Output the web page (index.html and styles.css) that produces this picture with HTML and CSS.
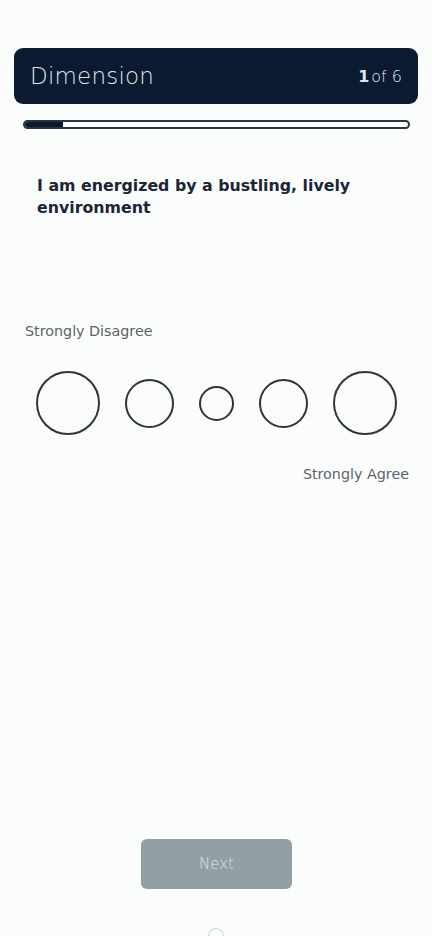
FILE: index.html
```html
<!DOCTYPE html>
<html>
<head>
<meta charset="utf-8">
<link rel="stylesheet" href="styles.css">
</head>
<body>
<div class="screen">
  <header class="topbar">
    <span class="title">Dimension</span>
    <span class="count"><b>1</b>of 6</span>
  </header>
  <div class="progress"><div class="fill"></div></div>
  <h1 class="question">I am energized by a bustling, lively environment</h1>
  <div class="label-left">Strongly Disagree</div>
  <div class="scale">
    <span class="dot d1"></span>
    <span class="dot d2"></span>
    <span class="dot d3"></span>
    <span class="dot d2"></span>
    <span class="dot d1"></span>
  </div>
  <div class="label-right">Strongly Agree</div>
  <div class="spacer"></div>
  <button class="next">Next</button>
  <div class="home"></div>
</div>
</body>
</html>
```
FILE: styles.css
```css
html, body {
  margin: 0;
  padding: 0;
  background: #fbfdfd;
}
body {
  font-family: "DejaVu Sans", "Noto Sans", sans-serif;
}
.screen {
  width: 432px;
  height: 936px;
  box-sizing: border-box;
  padding: 48px 14px 0;
  display: flex;
  flex-direction: column;
  overflow: hidden;
}
.topbar {
  height: 56px;
  background: #0b1a30;
  border-radius: 9px;
  display: flex;
  align-items: center;
  justify-content: space-between;
  padding: 0 16px;
  color: #dfe6ee;
}
.title {
  font-size: 23px;
  font-weight: 300;
  letter-spacing: 0.2px;
}
.count {
  font-size: 16px;
  font-weight: 300;
}
.count b {
  font-weight: 700;
  margin-right: 2px;
}
.progress {
  margin: 16px 8px 0 9px;
  height: 9px;
  border: 2px solid #2b3440;
  border-radius: 6px;
  background: #fff;
  overflow: hidden;
  box-sizing: border-box;
}
.fill {
  height: 100%;
  width: 10%;
  background: #0b1a30;
}
.question {
  margin: 46px 0 0 23px;
  font-size: 15.8px;
  font-weight: 700;
  line-height: 22px;
  color: #1b2536;
  width: 330px;
}
.label-left {
  margin: 104px 0 0 11px;
  font-size: 14.3px;
  font-weight: 400;
  color: #5e6368;
}
.scale {
  margin: 32px 0 0 22px;
  width: 361px;
  height: 64px;
  display: flex;
  align-items: center;
  justify-content: space-between;
}
.dot {
  display: block;
  border: 2px solid #303438;
  border-radius: 50%;
  box-sizing: border-box;
}
.d1 { width: 64px; height: 64px; }
.d2 { width: 49px; height: 49px; }
.d3 { width: 35px; height: 35px; }
.label-right {
  margin: 31px 9px 0 0;
  text-align: right;
  font-size: 14.3px;
  font-weight: 400;
  color: #5e6368;
}
.spacer {
  flex: 1;
}
.next {
  align-self: center;
  width: 151px;
  height: 50px;
  margin: 0 0 39px 1px;
  border: none;
  border-radius: 6px;
  background: #929fa5;
  color: #dce3e6;
  font-family: "DejaVu Sans", sans-serif;
  font-size: 15px;
  font-weight: 300;
}
.home {
  align-self: center;
  width: 16px;
  height: 8px;
  border: 1px solid #cfd4d8;
  border-bottom: none;
  border-radius: 8px 8px 0 0;
  box-sizing: border-box;
}
```
